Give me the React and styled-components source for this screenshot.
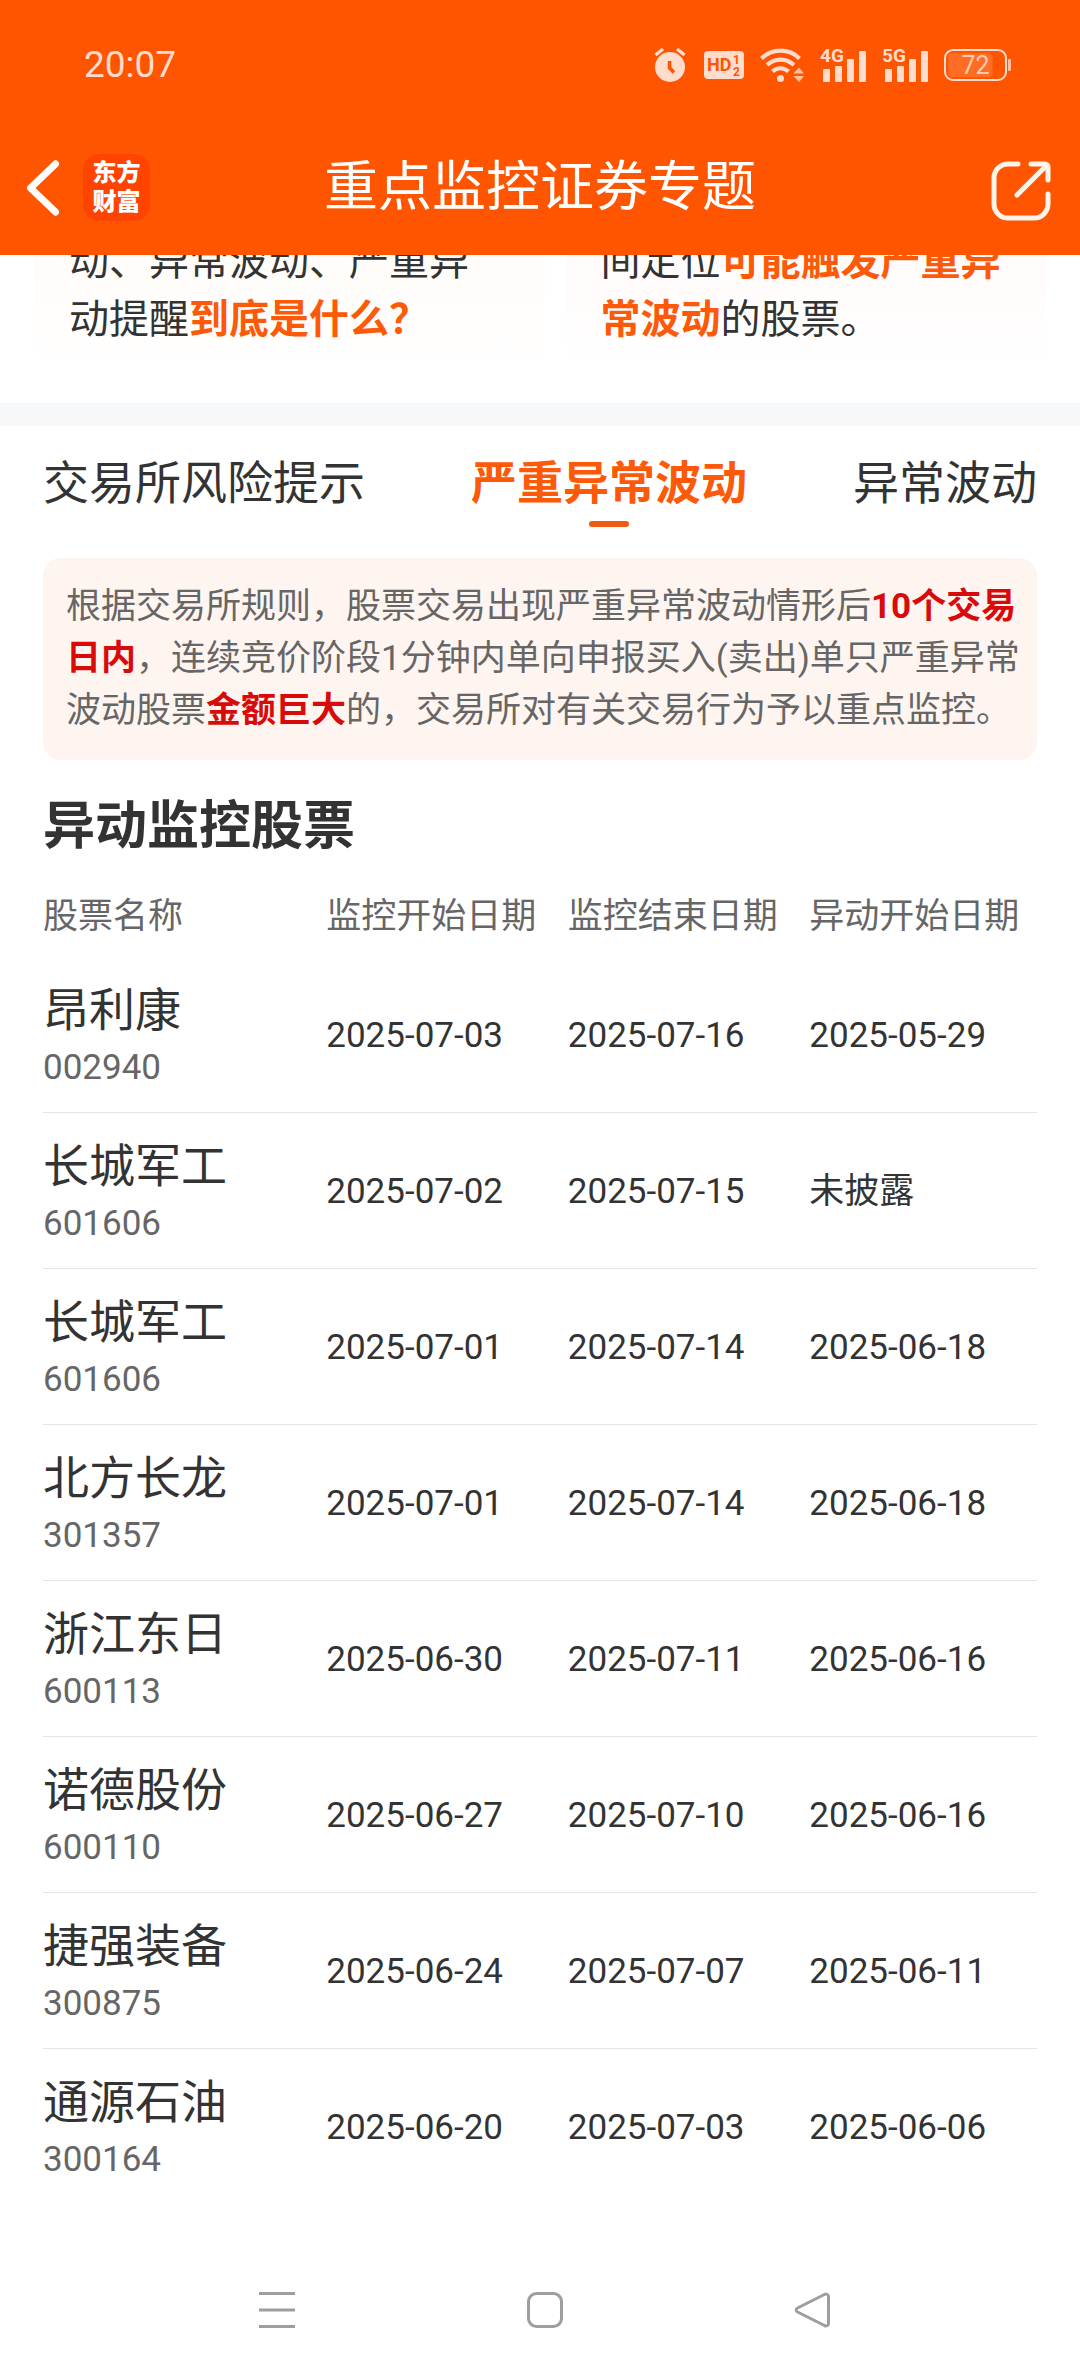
import React from 'react';
import styled, { createGlobalStyle } from 'styled-components';

const GlobalStyle = createGlobalStyle`
  * {
    box-sizing: border-box;
  }
  body {
    margin: 0;
    background-color: #ffffff;
    color: #333333;
    font-family: Roboto, 'Noto Sans CJK SC', sans-serif;
  }
  button {
    margin: 0;
    padding: 0;
    border: none;
    background: none;
    font-family: inherit;
    color: inherit;
  }
  svg {
    display: block;
    overflow: visible;
  }
`;

const Page = styled.div`
  min-height: 100vh;
  display: flex;
  flex-direction: column;
`;

const Header = styled.header`
  position: sticky;
  top: 0;
  z-index: 1;
  background-color: #ff5500;
  color: #ffffff;
`;

const StatusBar = styled.div`
  height: 118px;
  padding: 12px 69px 0 84px;
  display: flex;
  align-items: center;
  justify-content: space-between;
  color: #ffdccc;
`;

const Clock = styled.time`
  font-size: 37px;
  line-height: 48px;
`;

const StatusIcons = styled.div`
  display: flex;
  align-items: center;
  gap: 16px;
`;

const TitleBar = styled.div`
  height: 137px;
  padding: 2px 29px 0;
  display: grid;
  grid-template-columns: 1fr auto 1fr;
  align-items: center;
`;

const TitleLeft = styled.div`
  display: flex;
  align-items: center;
  gap: 24px;
`;

const Logo = styled.a`
  width: 67px;
  height: 67px;
  border-radius: 16px;
  background-color: #ff4400;
  display: flex;
  flex-direction: column;
  align-items: center;
  justify-content: center;
  color: #ffffff;
  font-size: 24px;
  font-weight: 900;
  line-height: 29px;
  text-decoration: none;
`;

const Title = styled.h1`
  margin: 0;
  font-size: 54px;
  font-weight: 400;
  line-height: 72px;
`;

const ShareButton = styled.button`
  justify-self: end;
  padding-top: 6px;
`;

const Main = styled.main`
  flex: 1;
`;

// scrolled up, the first line is half under the header
const Guides = styled.section`
  margin-top: -22px;
  padding: 0 34px 34px;
  display: grid;
  grid-template-columns: 51fr 48fr;
  gap: 21px;
  border-bottom: 23px solid #f7f8fa;
`;

const GuideCard = styled.p`
  margin: 0;
  padding: 0 42px 20px 35px;
  font-size: 40px;
  line-height: 58px;
  background: linear-gradient(${props => props.$tint}, #ffffff);
`;

const Highlight = styled.strong`
  color: ${props => props.$color || '#fc5a08'};
  font-weight: 700;
`;

const Tabs = styled.div`
  padding: 25px 43px 31px;
  display: flex;
  justify-content: space-between;
`;

const Tab = styled.button`
  display: flex;
  flex-direction: column;
  align-items: center;
  gap: 6px;
  font-size: 46px;
  line-height: 64px;
  font-weight: ${props => (props.$active ? 700 : 400)};
  color: ${props => (props.$active ? '#fc5a08' : '#333333')};
  white-space: nowrap;
`;

const TabLine = styled.span`
  width: 40px;
  height: 6px;
  border-radius: 3px;
  background-color: ${props => (props.$active ? '#f05a12' : 'transparent')};
`;

const Content = styled.section`
  padding: 0 43px;
`;

const Note = styled.p`
  margin: 0;
  padding: 23px 12px 23px 23px;
  border-radius: 18px;
  background-color: #fff5f0;
  color: #666666;
  font-size: 35px;
  line-height: 52px;
`;

const Heading = styled.h2`
  margin: 31px 0 0;
  font-size: 52px;
  font-weight: 700;
  line-height: 72px;
`;

const Table = styled.table`
  width: 100%;
  table-layout: fixed;
  border-collapse: collapse;
  font-size: 35px;
  line-height: 50px;
`;

const HeadCell = styled.th`
  width: ${props => props.$width};
  padding: 29px 0 14px;
  color: #666666;
  font-weight: 400;
  text-align: left;
  white-space: nowrap;
`;

const Row = styled.tr`
  height: 156px;
  border-bottom: 1px solid #e4e4e4;
  &:last-child {
    border-bottom: none;
  }
`;

const Cell = styled.td`
  padding: 4px 0 0;
  vertical-align: middle;
`;

const StockName = styled.div`
  font-size: 46px;
  line-height: 64px;
`;

const StockCode = styled.div`
  color: #666666;
  line-height: 52px;
`;

const SystemNav = styled.nav`
  padding: 40px 250px 48px 259px;
  display: flex;
  justify-content: space-between;
`;

const AlarmIcon = () => (
  <svg width="34" height="36" viewBox="0 0 34 36" fill="none">
    <circle cx="16" cy="20" r="15" fill="#ffdccc" />
    <path d="M1.5 8 9 2M30.5 8 23 2" stroke="#ffdccc" strokeWidth="3.4" />
    <path d="M15.6 14v7l4.4 4.4" stroke="#ff5500" strokeWidth="3.6" />
  </svg>
);

const HdIcon = () => (
  <svg width="40" height="28" viewBox="0 0 40 28">
    <rect width="40" height="28" rx="4" fill="#ffdccc" />
    <g fill="#ff5500" fontFamily="Roboto, sans-serif" fontWeight="700">
      <text x="3" y="20" fontSize="18">
        HD
      </text>
      <text x="29" y="13" fontSize="12">
        1
      </text>
      <text x="29" y="25" fontSize="12">
        2
      </text>
    </g>
  </svg>
);

const WifiIcon = () => (
  <svg width="44" height="36" viewBox="0 0 44 36" fill="none">
    <g stroke="#ffdccc" strokeWidth="4.2">
      <path d="M1.5 11.5a27 27 0 0 1 38 0" />
      <path d="M7 18a19.5 19.5 0 0 1 27 0" />
      <path d="M12.5 24.5a11.5 11.5 0 0 1 16 0" />
    </g>
    <circle cx="20.5" cy="31.5" r="3.5" fill="#ffdccc" />
    <path d="M33.5 26.5 39 20.5l5 6zM33.5 29 39 35l5-6z" fill="#ffc09f" />
  </svg>
);

const SignalIcon = ({ label }) => (
  <svg width="46" height="34" viewBox="0 0 46 34" fill="#ffdccc">
    <text x="0" y="14" fontSize="19" fontWeight="700" fontFamily="Roboto, sans-serif">
      {label}
    </text>
    <rect x="3" y="21" width="7" height="13" rx="1" />
    <rect x="15" y="18" width="7" height="16" rx="1" />
    <rect x="27" y="11" width="7" height="23" rx="1" />
    <rect x="39" y="3" width="7" height="31" rx="1" />
  </svg>
);

const BatteryIcon = ({ level }) => (
  <svg width="67" height="32" viewBox="0 0 67 32">
    <rect x="4" y="4" width={level * 0.62} height="24" rx="4" fill="#ff6c24" />
    <rect x="1" y="1" width="61" height="30" rx="8" fill="none" stroke="#ffdccc" strokeWidth="2" />
    <rect x="64" y="10" width="3" height="12" rx="1" fill="#ffc09f" />
    <text x="31.5" y="25" fontSize="25" textAnchor="middle" fill="#ffcdb3" fontFamily="Roboto, sans-serif">
      {level}
    </text>
  </svg>
);

const BackIcon = () => (
  <svg width="30" height="56" viewBox="2 0 30 56" fill="none">
    <path d="M28.5 4 3.5 28l25 24" stroke="#ffffff" strokeWidth="7" strokeLinecap="round" strokeLinejoin="round" />
  </svg>
);

const ShareIcon = () => (
  <svg width="60" height="60" viewBox="0 0 60 60" fill="none">
    <g stroke="#fff3ea" strokeWidth="5" strokeLinecap="round" strokeLinejoin="round">
      <path d="M27 3H17A14 14 0 0 0 3 17v26a14 14 0 0 0 14 14h26a14 14 0 0 0 14-14V33" />
      <path d="M40 3h14a3 3 0 0 1 3 3v13" />
      <path d="M26 34 55 5" />
    </g>
  </svg>
);

const MenuIcon = () => (
  <svg width="36" height="36" viewBox="0 0 36 36">
    <path d="M0 1.5h36M0 18h36M0 34.5h36" stroke="#9e9e9e" strokeWidth="3" />
  </svg>
);

const HomeIcon = () => (
  <svg width="36" height="36" viewBox="0 0 36 36">
    <rect x="1.5" y="1.5" width="33" height="33" rx="8" fill="none" stroke="#9e9e9e" strokeWidth="3" />
  </svg>
);

const ReturnIcon = () => (
  <svg width="36" height="36" viewBox="0 0 36 36">
    <path
      d="M30.5 2.5 3.5 16a2.2 2.2 0 0 0 0 4l27 13.5a2.5 2.5 0 0 0 4-2v-27a2.5 2.5 0 0 0-4-2z"
      fill="none"
      stroke="#9e9e9e"
      strokeWidth="3"
    />
  </svg>
);

const tabs = ['交易所风险提示', '严重异常波动', '异常波动'];
const activeTab = '严重异常波动';

const columns = [
  { title: '股票名称', width: '28.5%' },
  { title: '监控开始日期', width: '24.3%' },
  { title: '监控结束日期', width: '24.3%' },
  { title: '异动开始日期', width: 'auto' },
];

const stocks = [
  { name: '昂利康', code: '002940', start: '2025-07-03', end: '2025-07-16', moved: '2025-05-29' },
  { name: '长城军工', code: '601606', start: '2025-07-02', end: '2025-07-15', moved: '未披露' },
  { name: '长城军工', code: '601606', start: '2025-07-01', end: '2025-07-14', moved: '2025-06-18' },
  { name: '北方长龙', code: '301357', start: '2025-07-01', end: '2025-07-14', moved: '2025-06-18' },
  { name: '浙江东日', code: '600113', start: '2025-06-30', end: '2025-07-11', moved: '2025-06-16' },
  { name: '诺德股份', code: '600110', start: '2025-06-27', end: '2025-07-10', moved: '2025-06-16' },
  { name: '捷强装备', code: '300875', start: '2025-06-24', end: '2025-07-07', moved: '2025-06-11' },
  { name: '通源石油', code: '300164', start: '2025-06-20', end: '2025-07-03', moved: '2025-06-06' },
];

const StockRow = ({ stock }) => (
  <Row>
    <Cell>
      <StockName>{stock.name}</StockName>
      <StockCode>{stock.code}</StockCode>
    </Cell>
    <Cell>{stock.start}</Cell>
    <Cell>{stock.end}</Cell>
    <Cell>{stock.moved}</Cell>
  </Row>
);

const AppHeader = () => (
  <Header>
    <StatusBar>
      <Clock>20:07</Clock>
      <StatusIcons>
        <AlarmIcon />
        <HdIcon />
        <WifiIcon />
        <SignalIcon label="4G" />
        <SignalIcon label="5G" />
        <BatteryIcon level={72} />
      </StatusIcons>
    </StatusBar>
    <TitleBar>
      <TitleLeft>
        <button type="button" aria-label="返回">
          <BackIcon />
        </button>
        <Logo href="#">
          <span>东方</span>
          <span>财富</span>
        </Logo>
      </TitleLeft>
      <Title>重点监控证券专题</Title>
      <ShareButton type="button" aria-label="分享">
        <ShareIcon />
      </ShareButton>
    </TitleBar>
  </Header>
);

const App = () => (
  <Page lang="zh-CN">
    <GlobalStyle />
    <AppHeader />
    <Main>
      <Guides>
        <GuideCard $tint="#fffcf8">
          动、异常波动、严重异动提醒<Highlight>到底是什么？</Highlight>
        </GuideCard>
        <GuideCard $tint="#fffaf9">
          间定位<Highlight>可能触发严重异常波动</Highlight>的股票。
        </GuideCard>
      </Guides>
      <Tabs role="tablist">
        {tabs.map(tab => (
          <Tab key={tab} type="button" role="tab" aria-selected={tab === activeTab} $active={tab === activeTab}>
            {tab}
            <TabLine $active={tab === activeTab} />
          </Tab>
        ))}
      </Tabs>
      <Content>
        <Note>
          根据交易所规则，股票交易出现严重异常波动情形后<Highlight $color="#d90a0a">10个交易日内</Highlight>
          ，连续竞价阶段1分钟内单向申报买入(卖出)单只严重异常波动股票
          <Highlight $color="#d90a0a">金额巨大</Highlight>的，交易所对有关交易行为予以重点监控。
        </Note>
        <Heading>异动监控股票</Heading>
        <Table>
          <thead>
            <tr>
              {columns.map(column => (
                <HeadCell key={column.title} scope="col" $width={column.width}>
                  {column.title}
                </HeadCell>
              ))}
            </tr>
          </thead>
          <tbody>
            {stocks.map(stock => (
              <StockRow key={stock.start + stock.code} stock={stock} />
            ))}
          </tbody>
        </Table>
      </Content>
    </Main>
    <SystemNav>
      <button type="button" aria-label="最近任务">
        <MenuIcon />
      </button>
      <button type="button" aria-label="主屏幕">
        <HomeIcon />
      </button>
      <button type="button" aria-label="返回上一级">
        <ReturnIcon />
      </button>
    </SystemNav>
  </Page>
);

export default App;
